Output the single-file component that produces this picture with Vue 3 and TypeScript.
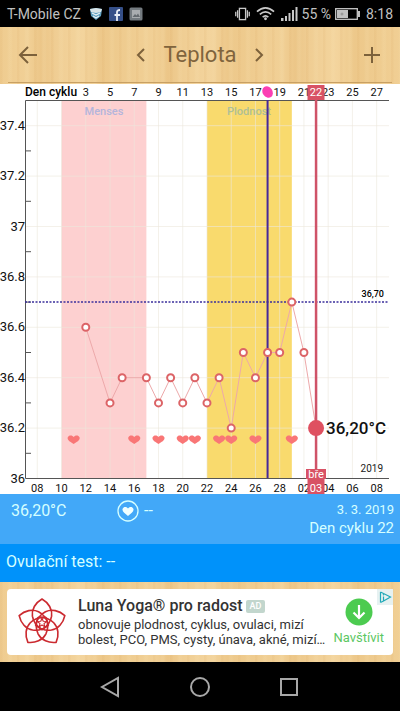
<script setup lang="ts">
interface Reading {
  day: number
  temp: number
}

const chartTop = 84
const readings: Reading[] = [
  { day: 12, temp: 36.6 },
  { day: 14, temp: 36.3 },
  { day: 15, temp: 36.4 },
  { day: 17, temp: 36.4 },
  { day: 18, temp: 36.3 },
  { day: 19, temp: 36.4 },
  { day: 20, temp: 36.3 },
  { day: 21, temp: 36.4 },
  { day: 22, temp: 36.3 },
  { day: 23, temp: 36.4 },
  { day: 24, temp: 36.2 },
  { day: 25, temp: 36.5 },
  { day: 26, temp: 36.4 },
  { day: 27, temp: 36.5 },
  { day: 28, temp: 36.5 },
  { day: 29, temp: 36.7 },
  { day: 30, temp: 36.5 },
  { day: 31, temp: 36.2 },
]
const heartDays = [11, 16, 18, 20, 21, 23, 24, 26, 29]
const evenDays = Array.from({ length: 15 }, (_, i) => 8 + i * 2)
const cycleDays = Array.from({ length: 13 }, (_, i) => 3 + i * 2)
const labelTemps = [37.4, 37.2, 37, 36.8, 36.6, 36.4, 36.2, 36]
const tickTemps = [37.3, 37.1, 36.9, 36.7, 36.5, 36.3, 36.1]

const x = (day: number): number => 37.3 + (day - 8) * 12.12
const y = (temp: number): number => 478.5 - chartTop - (temp - 36) * 252
const dateLabel = (day: number): string => String(day > 28 ? day - 28 : day).padStart(2, '0')
const line = readings.map((r) => `${x(r.day)},${y(r.temp)}`).join(' ')
const points = readings.slice(0, -1)
const petals = [0, 72, 144, 216, 288]
</script>

<template>
  <div class="screen">
    <div class="status">
      <span class="carrier">T-Mobile CZ</span>
      <svg class="app-icon" viewBox="0 0 14 14" aria-hidden="true">
        <path d="M1 2 7 1l6 1-1 7-5 4-5-4z" fill="#5e9fc0" />
        <path d="M1 2 7 1l6 1-1 3-5 1-5-1z" fill="#d8e4e8" />
        <path d="m3 6 4 2 4-2M4 9l3 2 3-2" fill="none" stroke="#e8f2f5" stroke-width="1.3" />
      </svg>
      <svg class="app-icon" viewBox="0 0 14 14" aria-hidden="true">
        <rect width="14" height="14" rx="1" fill="#354f88" />
        <path d="M8 14V8h3M5.500 8H8V5q0-2 3-2" fill="none" stroke="#e8edf6" stroke-width="1.800" />
      </svg>
      <svg class="app-icon" viewBox="0 0 14 14" aria-hidden="true">
        <rect x=".5" y=".5" width="13" height="13" rx="1.500" fill="#747b80" />
        <rect x="3" y="3" width="8" height="8" fill="#a9adb0" />
        <path d="m3.500 10 2.500-3 1.500 1.500 1.500-2 2 3.500z" fill="#656b70" />
      </svg>
      <span class="spacer"></span>
      <svg class="vibrate" viewBox="0 0 16 14" aria-hidden="true">
        <g fill="none" stroke="#c8c8c8" stroke-width="1.400">
          <rect x="4.700" y="1" width="6.600" height="12" />
          <path d="M2.800 3v8M.8 4.500v5M13.200 3v8M15.200 4.500v5" />
        </g>
      </svg>
      <svg class="wifi" viewBox="0 0 20 15" aria-hidden="true">
        <g fill="none" stroke="#c8c8c8" stroke-width="1.700">
          <path d="M1 5.500q9-8 18 0M4 8.500q6-5.500 12 0M7 11.300q3-2.700 6 0" />
        </g>
        <circle cx="10" cy="13" r="1.500" fill="#c8c8c8" />
      </svg>
      <svg class="signal" viewBox="0 0 17 14" aria-hidden="true">
        <path d="M0 11h2.500v3H0zM4 9h2v5H4zM7.500 6h2v8h-2zM11 3h2v11h-2zM14.500 0h2v14h-2z" fill="#c8c8c8" />
      </svg>
      <span class="percent">55 %</span>
      <svg class="battery" viewBox="0 0 25 12" aria-hidden="true">
        <rect x=".7" y=".7" width="21.600" height="10.600" fill="none" stroke="#c8c8c8" stroke-width="1.300" />
        <path d="M2 2h11v8H2zM23 3h2v6h-2z" fill="#c0c0c0" />
        <circle cx="7" cy="6" r="1.500" fill="#999" />
      </svg>
      <span>8:18</span>
    </div>

    <header class="header">
      <button type="button" aria-label="Zpět">
        <svg class="icon" viewBox="0 0 20 20"><path d="M19 10H2M10 2l-8 8 8 8" /></svg>
      </button>
      <div class="pager">
        <button type="button" aria-label="Předchozí">
          <svg class="chevron" viewBox="0 0 10 14"><path d="M8 1 2 7l6 6" /></svg>
        </button>
        <h1>Teplota</h1>
        <button type="button" aria-label="Další">
          <svg class="chevron" viewBox="0 0 10 14"><path d="m2 1 6 6-6 6" /></svg>
        </button>
      </div>
      <button type="button" aria-label="Přidat">
        <svg class="icon" viewBox="0 0 20 20"><path d="M10 2v16M2 10h16" /></svg>
      </button>
    </header>

    <svg class="chart" viewBox="0 0 400 410" role="img" aria-label="Teplota">
      <defs>
        <path id="heart" d="M0 4.500C-3 2.500-6.500 1-6-2-5-5-1-4.500 0-2.500 1-4.500 5-5 6-2 6.500 1 3 2.500 0 4.500z" />
      </defs>
      <rect class="menses" :x="x(10)" y="17" :width="x(17) - x(10)" height="377" />
      <rect class="fertile" :x="x(22)" y="17" :width="x(29) - x(22)" height="377" />
      <g class="grid">
        <line v-for="d in evenDays" :key="d" :x1="x(d)" :x2="x(d)" y1="17" y2="394" />
        <line v-for="t in labelTemps" :key="t" x1="26" x2="389" :y1="y(t)" :y2="y(t)" />
      </g>
      <text class="band-label" x="104" y="31">Menses</text>
      <text class="band-label fertile-label" x="249" y="31">Plodnost</text>
      <g class="axis">
        <path d="M389 16.500H25.500V394.500H389" />
        <line v-for="t in tickTemps" :key="t" x1="26" x2="31" :y1="y(t)" :y2="y(t)" />
      </g>
      <g class="temp-labels">
        <text v-for="t in labelTemps" :key="t" x="25" :y="y(t) + 4">{{ t }}</text>
      </g>
      <text class="cycle-title" x="25" y="12">Den cyklu</text>
      <g class="day-labels">
        <text v-for="c in cycleDays" :key="c" :x="x(c + 9)" y="12">{{ c }}</text>
        <text v-for="d in evenDays" :key="d" :x="x(d)" y="408">{{ dateLabel(d) }}</text>
      </g>
      <line class="cover" x1="25" x2="389" :y1="y(36.7)" :y2="y(36.7)" />
      <text class="cover-label" x="384" y="213">36,70</text>
      <text class="year" x="383" y="388">2019</text>
      <polyline class="curve" :points="line" />
      <line class="ovulation" :x1="x(27)" :x2="x(27)" y1="16" y2="394" />
      <ellipse class="egg" :cx="x(27)" cy="8" rx="5" ry="6" :transform="`rotate(-35 ${x(27)} 8)`" />
      <line class="cursor" :x1="x(31)" :x2="x(31)" y1="16" y2="394" />
      <circle v-for="p in points" :key="p.day" class="point" :cx="x(p.day)" :cy="y(p.temp)" r="3.500" />
      <use v-for="d in heartDays" :key="d" class="heart" href="#heart" :x="x(d)" y="355.500" />
      <circle class="current" :cx="x(31)" :cy="y(36.2)" r="8" />
      <text class="current-label" x="326" y="350">36,20°C</text>
      <g class="marker">
        <rect x="307.500" y="1" width="17" height="15" />
        <rect x="306" y="385" width="20" height="10" />
        <rect x="307.500" y="395" width="17" height="15" />
        <text :x="x(31)" y="12">22</text>
        <text :x="x(31)" y="394">bře</text>
        <text :x="x(31)" y="408">03</text>
      </g>
    </svg>

    <section class="summary">
      <span class="value">36,20°C</span>
      <span class="intimacy">
        <svg viewBox="0 0 22 22" aria-hidden="true">
          <circle cx="11" cy="11" r="10" fill="none" stroke="#d5ffff" stroke-width="1.300" />
          <path d="M11 16C8 13.500 5 11.500 5.500 9 6.500 6 10 6.500 11 8.500 12 6.500 15.500 6 16.500 9 17 11.500 14 13.500 11 16z" fill="#f0ffff" />
        </svg>
        --
      </span>
      <div class="date">
        <span>3. 3. 2019</span>
        <strong>Den cyklu 22</strong>
      </div>
    </section>
    <section class="test">Ovulační test: --</section>

    <div class="ad-area">
      <article class="ad">
        <svg class="logo" viewBox="-26 -26 52 50" aria-hidden="true">
          <g fill="none" stroke="#cb2a30" stroke-width="1.700" stroke-linejoin="round">
            <path v-for="a in petals" :key="a" :transform="`rotate(${a})`" d="M0-25C-7-21-11-14-10-7-9-1-5 4 0 7 5 4 9-1 10-7 11-14 7-21 0-25z" />
            <path stroke-width="1.200" d="M0-5 1.300-1.800 4.800-1.500 2.100.7 2.900 4 0 2.200-2.900 4-2.100.7-4.800-1.500-1.300-1.800z" />
          </g>
        </svg>
        <div class="ad-text">
          <h2>Luna Yoga® pro radost <span class="badge">AD</span></h2>
          <p>obnovuje plodnost, cyklus, ovulaci, mizí bolest, PCO, PMS, cysty, únava, akné, mizí stres</p>
        </div>
        <a class="visit" href="#">
          <svg viewBox="0 0 28 28" aria-hidden="true">
            <circle cx="14" cy="14" r="13.500" fill="#4ccb50" />
            <path d="M14 7v13M8.500 14.500 14 20l5.500-5.500" fill="none" stroke="#fff" stroke-width="2.200" />
          </svg>
          Navštívit
        </a>
        <svg class="adchoices" viewBox="0 0 16 16" aria-hidden="true">
          <rect width="16" height="16" fill="#e6f1f1" />
          <path d="M3.500 3v10.500M3.500 3 13.500 8l-7 4V7.500M3.500 13.500l3-1.500" fill="none" stroke="#22a9b8" stroke-width="1.200" />
          <circle cx="6.500" cy="5.800" r=".8" fill="#22a9b8" />
        </svg>
      </article>
    </div>

    <nav class="nav">
      <button type="button" aria-label="Zpět">
        <svg viewBox="0 0 22 22"><path d="M18 2v18L2 11z" /></svg>
      </button>
      <button type="button" aria-label="Domů">
        <svg viewBox="0 0 22 22"><circle cx="11" cy="11" r="9" /></svg>
      </button>
      <button type="button" aria-label="Přehled">
        <svg viewBox="0 0 22 22"><rect x="3" y="3" width="16" height="16" /></svg>
      </button>
    </nav>
  </div>
</template>

<style>
body {
  background: #000;
}
</style>

<style scoped>
.screen {
  display: flex;
  flex-direction: column;
  min-height: 100vh;
  font-family: Roboto, "Liberation Sans", sans-serif;
  background:
    repeating-linear-gradient(90deg, rgba(205, 145, 70, 0.08) 0 2px, transparent 3px 7px, rgba(255, 240, 200, 0.1) 9px 11px, transparent 13px 17px),
    repeating-linear-gradient(90deg, #efcc90 0, #f1d096 28px, #ecc688 41px, #f0ce94 57px, #f3d49d 83px, #edc88a 101px, #efcc90 127px);
}
button {
  display: flex;
  padding: 0;
  border: 0;
  background: none;
}
svg {
  display: block;
  flex: none;
}
.status {
  display: flex;
  align-items: center;
  height: 27px;
  padding: 0 7px;
  gap: 6px;
  box-sizing: border-box;
  background: #000;
  color: #c0c0c0;
  font-size: 14px;
}
.carrier {
  margin-right: 2px;
}
.app-icon {
  width: 14px;
  height: 14px;
}
.spacer {
  flex: 1;
}
.vibrate {
  width: 15px;
  height: 14px;
}
.wifi {
  width: 19px;
  height: 15px;
}
.signal {
  width: 17px;
  height: 14px;
}
.percent {
  margin: 0 -2px;
}
.battery {
  width: 25px;
  height: 12px;
}
.header {
  display: flex;
  align-items: center;
  justify-content: space-between;
  height: 55px;
  margin: 0 8px 1px;
  padding: 0 10px;
  border-bottom: 1px solid #c8a064;
}
.header svg {
  fill: none;
  stroke: #7c613b;
  stroke-width: 2;
}
.icon {
  width: 20px;
  height: 20px;
}
.pager {
  display: flex;
  align-items: center;
  gap: 17px;
}
.chevron {
  width: 10px;
  height: 14px;
}
h1 {
  margin: 0;
  color: #80643d;
  font-size: 22px;
  font-weight: 400;
}
.chart {
  width: 100%;
  height: auto;
  background: #fff;
}
.menses {
  fill: #fdd0d0;
}
.fertile {
  fill: #f9da6d;
}
.grid line {
  stroke: #ece7dc;
  stroke-opacity: 0.6;
}
.band-label {
  fill: #b4b5dc;
  font-size: 11px;
  font-weight: 500;
  text-anchor: middle;
}
.fertile-label {
  fill: #aebf98;
}
.axis {
  fill: none;
  stroke: #555;
}
.temp-labels {
  fill: #111;
  font-size: 13px;
  text-anchor: end;
}
.day-labels {
  fill: #111;
  font-size: 11px;
  text-anchor: middle;
}
.cycle-title {
  font-size: 12px;
  font-weight: 500;
}
.cover {
  stroke: #3b2f9c;
  stroke-width: 1.5;
  stroke-dasharray: 2 1.5;
}
.cover-label {
  font-size: 9px;
  font-weight: 500;
  text-anchor: end;
}
.year {
  fill: #222;
  font-size: 10px;
  text-anchor: end;
}
.curve {
  fill: none;
  stroke: #eda9aa;
}
.ovulation {
  stroke: #46289a;
  stroke-width: 2;
}
.egg {
  fill: #fb3fb4;
}
.cursor {
  stroke: #cf5368;
  stroke-width: 2.5;
}
.point {
  fill: #fff;
  stroke: #dc6467;
  stroke-width: 2;
}
.heart {
  fill: #f97676;
}
.current {
  fill: #df5060;
}
.current-label {
  fill: #111;
  font-size: 17px;
  font-weight: 500;
}
.marker rect {
  fill: #d85265;
}
.marker text {
  fill: #fff;
  font-size: 11px;
  text-anchor: middle;
}
.summary {
  display: flex;
  align-items: flex-start;
  height: 50px;
  box-sizing: border-box;
  padding: 6px 6px 0 11px;
  background: #42a8f8;
  color: #d5ffff;
  font-size: 16px;
  line-height: 22px;
}
.value {
  flex: 0 0 106px;
}
.intimacy {
  display: flex;
  flex: 1;
  gap: 5px;
}
.intimacy svg {
  width: 22px;
  height: 22px;
}
.date {
  display: flex;
  flex-direction: column;
  align-items: flex-end;
  font-size: 13px;
  line-height: 19px;
}
.date strong {
  font-size: 15px;
  font-weight: 400;
}
.test {
  height: 38px;
  padding: 0 6px;
  background: #0092fa;
  color: #d5ffff;
  font-size: 16px;
  line-height: 36px;
}
.ad-area {
  padding: 7px;
}
.ad {
  position: relative;
  display: flex;
  align-items: center;
  height: 66px;
  padding: 0 9px 0 10px;
  border-radius: 4px;
  background: #fff;
}
.logo {
  width: 50px;
  height: 48px;
}
.ad-text {
  flex: 1;
  min-width: 0;
  margin-left: 11px;
  color: #333;
}
h2 {
  display: flex;
  align-items: center;
  gap: 3px;
  margin: 0;
  font-size: 16px;
  font-weight: 500;
  line-height: 18px;
  white-space: nowrap;
}
.badge {
  padding: 0 4px;
  border-radius: 2px;
  background: #c2d6cd;
  color: #fff;
  font-size: 9px;
  line-height: 13px;
}
p {
  display: -webkit-box;
  overflow: hidden;
  margin: 2px 0 0;
  font-size: 13px;
  line-height: 15px;
  -webkit-box-orient: vertical;
  -webkit-line-clamp: 2;
}
.visit {
  display: flex;
  flex-direction: column;
  align-items: center;
  gap: 3px;
  margin-left: 6px;
  color: #5cc763;
  font-size: 13px;
  line-height: 18px;
  text-decoration: none;
}
.visit svg {
  width: 28px;
  height: 28px;
}
.adchoices {
  position: absolute;
  top: 0;
  right: 0;
  width: 16px;
  height: 16px;
}
.nav {
  display: flex;
  flex: 1;
  align-items: center;
  justify-content: center;
  gap: 67px;
  min-height: 49px;
  background: #000;
}
.nav svg {
  width: 22px;
  height: 22px;
  fill: none;
  stroke: #a8a8a8;
  stroke-width: 2;
}
</style>
